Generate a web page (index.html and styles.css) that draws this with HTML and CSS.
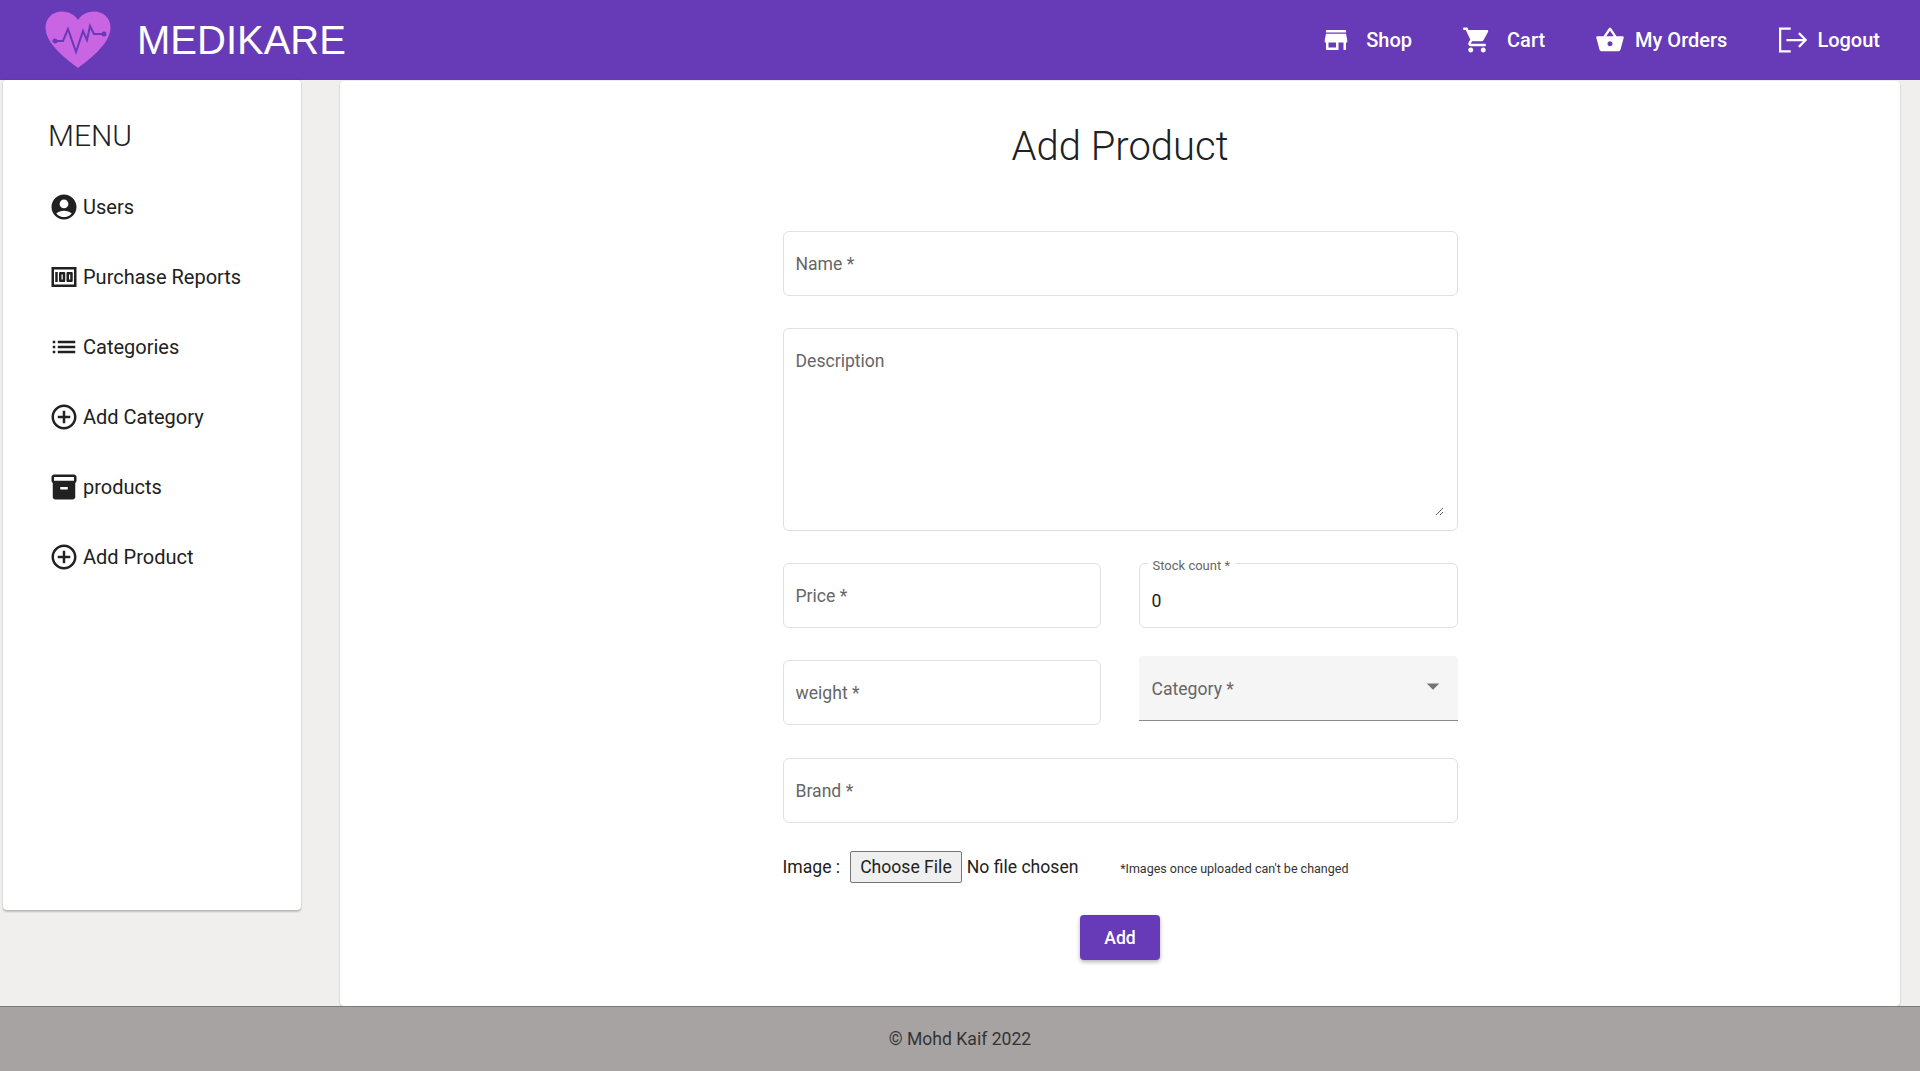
FILE: index.html
```html
<!DOCTYPE html>
<html lang="en">
<head>
    <meta charset="UTF-8">
    <meta name="viewport" content="width=device-width, initial-scale=1.0">
    <title>Medikare - Add Product</title>
    <link rel="stylesheet" href="styles.css">
</head>
<body>
    <header class="topbar">
        <a class="brand" href="#">
            <svg class="brand-logo" viewBox="0 0 66 58" aria-hidden="true">
                <path fill="#c964e2" d="M33 57C24 50 1 34 0.5 17 0.2 7 8 0.5 17 0.5 24 0.5 30 4 33 9 36 4 42 0.5 49 0.5 58 0.5 66 7 65.500 17 65 34 42 50 33 57Z"/>
                <path fill="none" stroke="#673ab7" stroke-width="2" d="M10 30H18L23 18 31 41 38 20 42 29 45 15 49 23H59"/>
                <circle fill="#673ab7" cx="10" cy="30" r="2.500"/>
                <circle fill="#673ab7" cx="59" cy="23" r="2.500"/>
            </svg>
            <span class="brand-name">MEDIKARE</span>
        </a>
        <nav class="topnav">
            <a href="#">
                <svg viewBox="0 0 24 24"><path d="M20 4H4v2h16V4zm1 10v-2l-1-5H4l-1 5v2h1v6h10v-6h4v6h2v-6h1zm-9 4H6v-4h6v4z"/></svg>
                <span>Shop</span>
            </a>
            <a href="#">
                <svg viewBox="0 0 24 24"><path d="M7 18c-1.100 0-1.990.9-1.990 2S5.900 22 7 22s2-.9 2-2-.9-2-2-2zM1 2v2h2l3.600 7.590-1.350 2.450c-.16.28-.25.61-.25.96 0 1.100.9 2 2 2h12v-2H7.420c-.14 0-.25-.11-.25-.25l.03-.12.9-1.630h7.450c.75 0 1.410-.41 1.750-1.030l3.580-6.490c.08-.14.12-.31.12-.48 0-.55-.45-1-1-1H5.210l-.94-2H1zm16 16c-1.100 0-1.990.9-1.990 2s.89 2 1.990 2 2-.9 2-2-.9-2-2-2z"/></svg>
                <span>Cart</span>
            </a>
            <a class="tight" href="#">
                <svg viewBox="0 0 24 24"><path d="M17.210 9l-4.380-6.560c-.19-.28-.51-.42-.83-.42-.32 0-.64.14-.83.43L6.790 9H2c-.55 0-1 .45-1 1 0 .09.01.18.04.27l2.540 9.270c.23.84 1 1.460 1.920 1.460h13c.92 0 1.690-.62 1.930-1.460l2.540-9.270L23 10c0-.55-.45-1-1-1h-4.790zM9 9l3-4.400L15 9H9zm3 8c-1.100 0-2-.9-2-2s.9-2 2-2 2 .9 2 2-.9 2-2 2z"/></svg>
                <span>My Orders</span>
            </a>
            <a class="tight" href="#">
                <svg viewBox="0 0 24 24"><path fill="none" stroke="#fff" stroke-width="1.800" d="M11 2.900H2.500V21.100H11M7.500 12H23M17.500 6.500L23 12 17.500 17.500"/></svg>
                <span>Logout</span>
            </a>
        </nav>
    </header>

    <div class="page">
        <aside class="sidebar">
            <h2 class="sidebar-title">MENU</h2>
            <ul class="menu">
                <li>
                    <svg viewBox="0 0 24 24"><path d="M12 2C6.480 2 2 6.480 2 12s4.480 10 10 10 10-4.480 10-10S17.520 2 12 2zm0 4c1.930 0 3.500 1.570 3.500 3.500S13.930 13 12 13s-3.500-1.570-3.500-3.500S10.070 6 12 6zm0 14c-2.030 0-4.430-.82-6.140-2.880C7.550 15.800 9.680 15 12 15s4.450.8 6.140 2.120C16.430 19.180 14.030 20 12 20z"/></svg>
                    Users
                </li>
                <li>
                    <svg viewBox="0 0 24 24"><path d="M5 8h2v8H5zm7 0H9c-.55 0-1 .45-1 1v6c0 .55.45 1 1 1h3c.55 0 1-.45 1-1V9c0-.55-.45-1-1-1zm-1 6h-1v-4h1v4zm7-6h-3c-.55 0-1 .45-1 1v6c0 .55.45 1 1 1h3c.55 0 1-.45 1-1V9c0-.55-.45-1-1-1zm-1 6h-1v-4h1v4z"/><path d="M2 4v16h20V4H2zm2 14V6h16v12H4z"/></svg>
                    Purchase Reports
                </li>
                <li>
                    <svg viewBox="0 0 24 24"><path d="M3 13h2v-2H3v2zm0 4h2v-2H3v2zm0-8h2V7H3v2zm4 4h14v-2H7v2zm0 4h14v-2H7v2zM7 7v2h14V7H7z"/></svg>
                    Categories
                </li>
                <li>
                    <svg viewBox="0 0 24 24"><path d="M13 7h-2v4H7v2h4v4h2v-4h4v-2h-4V7zm-1-5C6.480 2 2 6.480 2 12s4.480 10 10 10 10-4.480 10-10S17.520 2 12 2zm0 18c-4.410 0-8-3.590-8-8s3.590-8 8-8 8 3.590 8 8-3.590 8-8 8z"/></svg>
                    Add Category
                </li>
                <li>
                    <svg viewBox="0 0 24 24"><path d="M20 2H4c-1 0-2 .9-2 2v3.010c0 .72.43 1.340 1 1.690V20c0 1.100 1.100 2 2 2h14c.9 0 2-.9 2-2V8.700c.57-.35 1-.97 1-1.690V4c0-1.100-1-2-2-2zm-5 12H9v-2h6v2zm5-7H4V4l16-.02V7z"/></svg>
                    products
                </li>
                <li>
                    <svg viewBox="0 0 24 24"><path d="M13 7h-2v4H7v2h4v4h2v-4h4v-2h-4V7zm-1-5C6.480 2 2 6.480 2 12s4.480 10 10 10 10-4.480 10-10S17.520 2 12 2zm0 18c-4.410 0-8-3.590-8-8s3.590-8 8-8 8 3.590 8 8-3.590 8-8 8z"/></svg>
                    Add Product
                </li>
            </ul>
        </aside>

        <main class="content">
            <h1>Add Product</h1>
            <form class="product-form">
                <input class="field" type="text" placeholder="Name *">
                <div class="field area-box">
                    <textarea placeholder="Description"></textarea>
                </div>
                <div class="form-row">
                    <input class="field" type="text" placeholder="Price *">
                    <div class="stock">
                        <span class="stock-label">Stock count *</span>
                        <input class="field stock-input" type="number" value="0">
                    </div>
                </div>
                <div class="form-row">
                    <input class="field" type="text" placeholder="weight *">
                    <div class="select-box">
                        <span>Category *</span>
                        <svg viewBox="0 0 24 24"><path d="M7 10l5 5 5-5z"/></svg>
                    </div>
                </div>
                <input class="field brand-field" type="text" placeholder="Brand *">
                <div class="image-row">
                    <label>Image :</label>
                    <input class="file-input" type="file">
                    <small>*Images once uploaded can't be changed</small>
                </div>
                <button class="add-btn" type="button">Add</button>
            </form>
        </main>
    </div>

    <footer class="footer">© Mohd Kaif 2022</footer>
</body>
</html>
```

FILE: styles.css
```css
/* Styles for the page */
* {
    box-sizing: border-box;
}

body {
    font-family: Roboto, Arial, sans-serif;
    background-color: #f0efee;
    color: #212121;
    margin: 0;
    height: 1071px;
    display: flex;
    flex-direction: column;
    overflow: hidden;
}

.topbar {
    height: 80px;
    flex: none;
    background-color: #673ab7;
    display: flex;
    justify-content: space-between;
    align-items: center;
    padding: 0 40px 0 45px;
}

.brand {
    display: flex;
    align-items: center;
    color: #fff;
    text-decoration: none;
}

.brand-logo {
    width: 66px;
    height: 58px;
    margin-right: 26px;
}

.brand-name {
    font-family: "Liberation Sans", Arial, sans-serif;
    font-size: 40px;
}

.topnav {
    display: flex;
    gap: 50px;
}

.topnav a {
    display: flex;
    align-items: center;
    gap: 15px;
    color: #fff;
    text-decoration: none;
    font-size: 20px;
    font-weight: 500;
}

.topnav a.tight {
    gap: 10px;
}

.topnav svg {
    width: 30px;
    height: 30px;
    fill: #fff;
}

.page {
    flex: 1;
    display: flex;
    align-items: flex-start;
    padding-left: 3px;
}

.sidebar {
    width: 298px;
    height: 830px;
    background-color: #fff;
    border-radius: 4px;
    box-shadow: 0 2px 2px rgba(0, 0, 0, 0.2), 0 0 2px rgba(0, 0, 0, 0.12);
    padding: 38px 46px;
}

.sidebar-title {
    margin: 0 0 18px -1px;
    font-size: 30px;
    font-weight: 300;
    line-height: 36px;
}

.menu {
    list-style: none;
    margin: 0;
    padding: 0;
}

.menu li {
    height: 70px;
    display: flex;
    align-items: center;
    gap: 4px;
    font-size: 20px;
}

.menu svg {
    width: 30px;
    height: 30px;
    fill: #212121;
}

.content {
    width: 1560px;
    height: 925px;
    margin-left: 39px;
    margin-top: 1px;
    background-color: #fff;
    border-radius: 4px;
    box-shadow: 0 1px 2px rgba(0, 0, 0, 0.25);
    padding-top: 42px;
}

.content h1 {
    margin: 0 0 60px;
    text-align: center;
    font-size: 40px;
    font-weight: 300;
    line-height: 48px;
}

.product-form {
    width: 675px;
    margin: 0 auto;
    display: flex;
    flex-direction: column;
    gap: 32px;
}

.field {
    width: 100%;
    height: 65px;
    border: 1px solid #e0e0e0;
    border-radius: 6px;
    padding: 0 12px;
    font-family: inherit;
    font-size: 17.600px;
    color: #212121;
    background-color: #fff;
    outline: none;
}

.brand-field {
    margin-top: 1px;
}

.field::placeholder,
.area-box textarea::placeholder {
    color: #666;
    opacity: 1;
}

.area-box {
    height: 203px;
    padding: 22px 13px 14px 12px;
}

.area-box textarea {
    display: block;
    width: 100%;
    height: 100%;
    border: none;
    outline: none;
    padding: 0;
    font-family: inherit;
    font-size: 17.600px;
}

.form-row {
    display: grid;
    grid-template-columns: 318px 319px;
    justify-content: space-between;
}

.stock {
    position: relative;
}

.stock-input {
    padding-top: 10px;
    appearance: textfield;
}

.stock-label {
    position: absolute;
    left: 9px;
    top: -5px;
    padding: 0 5px;
    background-color: #fff;
    color: #666;
    font-size: 13px;
    line-height: 16px;
}

.select-box {
    height: 65px;
    margin-top: -4px;
    background-color: #f5f5f5;
    border-bottom: 1px solid #8a8a8a;
    border-radius: 4px 4px 0 0;
    display: flex;
    justify-content: space-between;
    align-items: center;
    padding: 2px 10px 0 13px;
    font-size: 17.600px;
    color: #666;
}

.select-box svg {
    width: 30px;
    height: 30px;
    fill: #757575;
    margin-top: -6px;
}

.image-row {
    display: flex;
    align-items: center;
    height: 32px;
    margin-top: -4px;
    font-size: 17.600px;
}

.image-row label {
    margin-right: 10px;
}

.file-input {
    width: 270px;
    font-family: inherit;
    font-size: 17.600px;
    color: #212121;
}

.file-input::file-selector-button {
    height: 32px;
    padding: 0 9px;
    margin-right: 5px;
    border: 1px solid #767676;
    border-radius: 2px;
    background-color: #efefef;
    font-family: inherit;
    font-size: 17.600px;
    color: #212121;
}

.image-row small {
    font-size: 12.500px;
    color: #333;
    margin-top: 3px;
}

.add-btn {
    align-self: center;
    width: 80px;
    height: 45px;
    border: none;
    border-radius: 4px;
    background-color: #673ab7;
    color: #fff;
    font-family: inherit;
    font-size: 17.600px;
    font-weight: 500;
    box-shadow: 0 2px 4px rgba(0, 0, 0, 0.3);
    cursor: pointer;
}

.footer {
    height: 65px;
    flex: none;
    background-color: #a7a3a3;
    border-top: 1px solid #7d7a7a;
    display: flex;
    justify-content: center;
    align-items: center;
    font-size: 17.600px;
    color: #333;
}
```
